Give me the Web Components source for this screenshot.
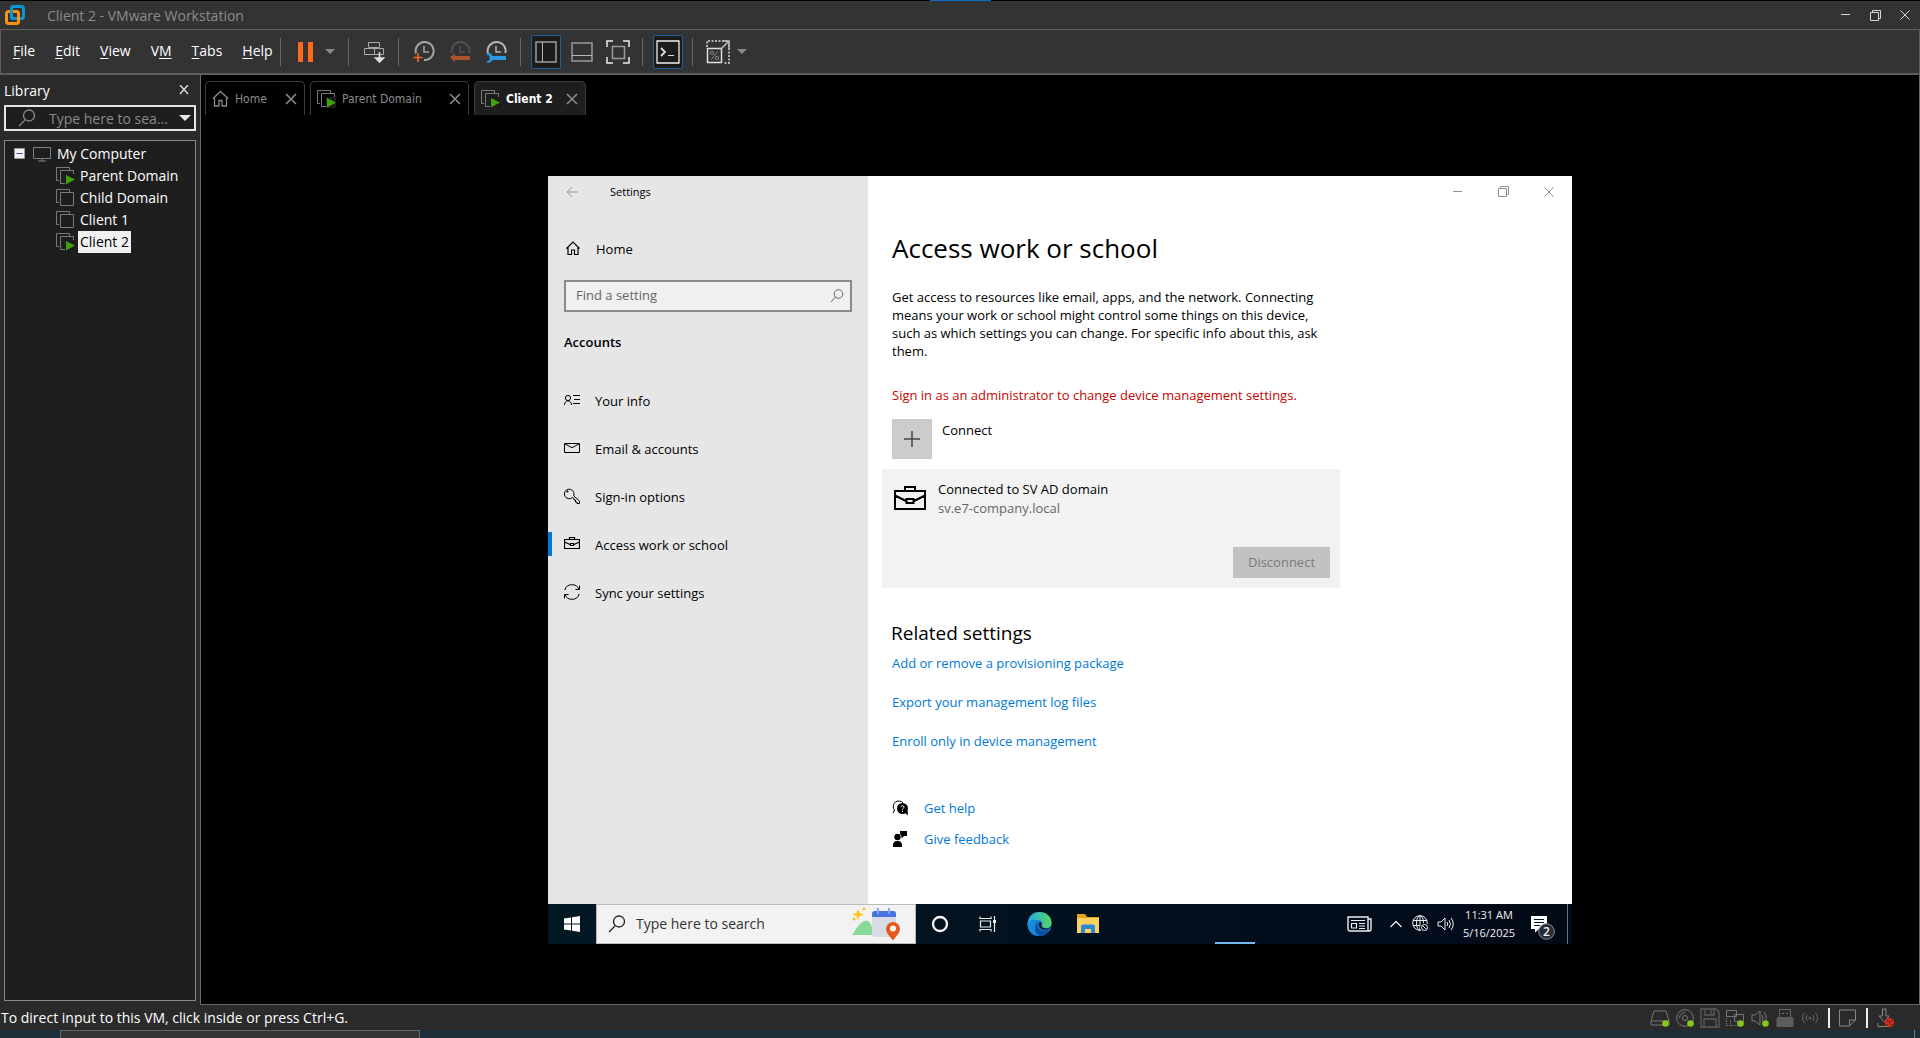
<!DOCTYPE html>
<html lang="en">
<head>
<meta charset="utf-8">
<title>Client 2 - VMware Workstation</title>
<style>
html,body{margin:0;height:100%;background:#000}
body{font-family:"Open Sans","Noto Sans",sans-serif;font-size:14px;color:#fff}
</style>
</head>
<body>
<vm-workstation></vm-workstation>
<script>
const stack = (extra) => `<path d="M13.5 3V.5H.5v13H3" fill="none" stroke="#7a7a7a"/><path d="M4.500 3.500h13v13h-13z" fill="none" stroke="#7a7a7a"/>${extra}`;
const play = '<path d="M9 7v11h10V7z" fill="#1c1c1c"/><path d="M9 16.500H4.500M17.500 7V3.500" stroke="#7a7a7a"/><path d="M10 8l9 4.500-9 5z" fill="#43a00c"/>';
const clock = (c) => `<path d="M4.500 15.500A9 9 0 1 1 11 19" fill="none" stroke="${c}" stroke-width="2"/><path d="M11 5v6h5" fill="none" stroke="${c}" stroke-width="1.500"/>`;
const dot = (x, y) => `<circle cx="${x}" cy="${y}" r="3.300" fill="#84c81b"/>`;
const ICONS = {
  logo: [20, 20, '<rect x="6.500" y="1.500" width="12" height="12" rx="2" fill="none" stroke="#0e95d3" stroke-width="3"/><rect x="1.500" y="6.500" width="12" height="12" rx="2" fill="none" stroke="#f6920e" stroke-width="3"/><path d="M6.500 5v6.500a2 2 0 0 0 2 2H10" fill="none" stroke="#0e95d3" stroke-width="3"/>'],
  min: [10, 10, '<path d="M0 4.500h9" stroke="currentColor"/>'],
  restore: [11, 11, '<path d="M2.500 2V.5h8v8H9M.5 2.500h8v8h-8z" fill="none" stroke="currentColor"/>'],
  close: [10, 10, '<path d="M.5.5l9 9M9.500.5l-9 9" stroke="currentColor"/>'],
  tabclose: [12, 12, '<path d="M1 1l10 10M11 1L1 11" stroke="#8a8a8a" stroke-width="1.600"/>'],
  libclose: [10, 10, '<path d="M1 0l8 9M9 0L1 9" stroke="#ddd" stroke-width="1.400"/>'],
  caret: [10, 5, '<path d="M0 0h10L5 5z" fill="currentColor"/>'],
  bigcaret: [12, 6, '<path d="M0 0h12L6 6z" fill="currentColor"/>'],
  pause: [16, 20, '<path d="M0 0h5v20H0zM10 0h5v20h-5z" fill="#ff6a1a"/>'],
  cad: [22, 22, '<path d="M5.500 6V1.500h11V6M1.500 7.500h10v6h-10zM11.500 7.500h9v6h-9zM5.500 6.500h11" fill="none" stroke="#aaa"/><path d="M16.500 11v9M12.500 17l4 4 4-4z" stroke="#ddd" stroke-width="1.600" fill="#ddd"/>'],
  snap: [22, 22, clock('#a6a6a6') + '<path d="M5 12v9M.5 16.500h9" stroke="#333" stroke-width="5"/><path d="M5 12v9M.5 16.500h9" stroke="#f0642c" stroke-width="1.600"/>'],
  revert: [22, 22, clock('#505050') + '<path d="M0 12h22v10H0z" fill="#333"/><path d="M1 16.500l5-4v2.500h15v4H6v2z" fill="#a9522b"/>'],
  manage: [22, 22, clock('#b5b5b5') + '<path d="M0 12h22v10H0z" fill="#333"/><path d="M1 12.500a4.500 4.500 0 0 1 6.500 2.500H21v4H7.500A4.500 4.500 0 0 1 1 21l2-1.500h1.500v-5H3z" fill="#2a9be2"/>'],
  libview: [22, 22, '<path d="M1 1h20v20H1z" fill="none" stroke="#9a9a9a" stroke-width="1.500"/><path d="M7.500 1v20" stroke="#b5b5b5"/>'],
  thumb: [22, 20, '<path d="M1 1h20v18H1z" fill="none" stroke="#9a9a9a" stroke-width="1.500"/><path d="M1 13.500h20" stroke="#b5b5b5"/>'],
  full: [24, 24, '<path d="M1 7V1h6M17 1h6v6M23 17v6h-6M7 23H1v-6" fill="none" stroke="#eee" stroke-width="1.500"/><path d="M6.500 6.500h12v12h-12z" fill="none" stroke="#9a9a9a" stroke-width="1.500"/>'],
  console: [24, 24, '<path d="M1 1h22v22H1z" fill="#1c1c1c" stroke="#eee" stroke-width="1.300"/><path d="M5 8l4 4-4 4" fill="none" stroke="#ddd" stroke-width="1.800"/><path d="M12 15.500h6" stroke="#ddd"/>'],
  stretch: [24, 24, '<path d="M1 7V1h22v22h-6" fill="none" stroke="#ddd" stroke-dasharray="2 1.500" stroke-width="1.500"/><path d="M1.500 8.500h14v14h-14z" fill="none" stroke="#ddd" stroke-width="1.500"/><path d="M15 9l7-7M16 1h7v7" fill="none" stroke="#bbb" stroke-width="1.500"/><circle cx="6" cy="13" r="1.600" fill="none" stroke="#888"/><circle cx="11" cy="18" r="1.600" fill="none" stroke="#888"/><path d="M11.500 11.500l-6 8" stroke="#888"/>'],
  lens: [18, 18, '<circle cx="11" cy="6.500" r="5.500" fill="none" stroke="currentColor" stroke-width="1.300"/><path d="M7 11l-6 6" stroke="currentColor" stroke-width="1.300"/>'],
  lenssm: [14, 14, '<circle cx="8.500" cy="5" r="4.300" fill="none" stroke="currentColor"/><path d="M5.500 8L1 13" stroke="currentColor"/>'],
  expand: [12, 12, '<path d="M.5.5h10v10H.5z" fill="#f2f2f2" stroke="#999"/><path d="M2.500 5.500h6" stroke="#3450a0"/>'],
  monitor: [18, 15, '<path d="M.5.5h17v11H.5zM9 12v2M5 14h8" fill="none" stroke="#808080"/>'],
  vmoff: [19, 18, stack('')],
  vmon: [19, 18, stack(play)],
  tabhome: [17, 17, '<path d="M1 8.500l7.500-7L16 8.500M2.500 8v8H7v-5.500h3V16h4.500V8" fill="none" stroke="#8a8a8a" stroke-width="1.300"/>'],
  back: [12, 12, '<path d="M12 6H1M6 1L1 6l5 5" fill="none" stroke="#999"/>'],
  home: [16, 14, '<path d="M1.500 7.500L8 1l6.500 6.500M3 6.500V13.500H6.500V9h3v4.500H13V6.500" fill="none" stroke="#000" stroke-width="1.200"/>'],
  info: [16, 10, '<circle cx="4" cy="3" r="2.600" fill="none" stroke="#000"/><path d="M.5 10C.5 4.500 7.500 4.500 7.500 10M9 .5h7M10 4.500h6M9 8.500h7" fill="none" stroke="#000"/>'],
  mail: [16, 10, '<path d="M.5.5h15v9H.5zM1 1l7 3.700L15 1" fill="none" stroke="#000"/>'],
  key: [16, 16, '<path d="M8.500 9.500A4.800 4.800 0 1 1 10 6.500L9.800 8l5.700 5v2.500H13V14h-1.500v-2H10v-1.500z" fill="none" stroke="#000"/><circle cx="3.500" cy="3.500" r="1" fill="#000"/>'],
  bag: [16, 13, '<path d="M.5 2.500h15v9H.5zM5.500 2.500v-2h5v2M.5 5l5.500 2.500M15.500 5L10 7.500M6.500 6.500h3v2h-3z" fill="none" stroke="#000" stroke-width="1.200"/>'],
  bigbag: [32, 24, '<path d="M1 5h30v18H1zM11 5V1h10v4M1 9.500l11 5.500M31 9.500L20 15M12.500 13h7v4h-7z" fill="none" stroke="#000" stroke-width="2"/>'],
  sync: [16, 16, '<path d="M.8 6A7.500 7.500 0 0 1 15 5.500M15.200 10A7.500 7.500 0 0 1 1 10.500M15.500 1.500v4h-4M.5 14.500v-4h4" fill="none" stroke="#000"/>'],
  plus: [16, 16, '<path d="M8 0v16M0 8h16" stroke="#444" stroke-width="1.500"/>'],
  help: [16, 16, '<path d="M1 13l1.500-3A5.300 5.300 0 1 1 11 3" fill="none" stroke="#000"/><circle cx="10.500" cy="8.500" r="5.500"/><path d="M12 12l4 3.500-.5-5z"/><path d="M8.800 7.200c.2-2 3.400-1.800 3.200 0-.1 1.200-1.600 1.100-1.600 2.500M10.400 10.800v1.200" fill="none" stroke="#fff"/>'],
  feedback: [16, 16, '<circle cx="5.500" cy="6" r="3.200"/><path d="M1 16v-2.500a4 4 0 0 1 4-3.500h1a4 4 0 0 1 4 3.500V16zM8 0h7v5h-3l-2.500 2.500V5L8 3z"/>'],
  win: [16, 18, '<path d="M0 3.500l7-1v6H0zM8 2.300L16 1v7.500H8zM0 9.500h7v6l-7-1zM8 9.500h8V17l-8-1.200z" fill="#fff"/>'],
  art: [48, 34, '<path d="M6 2l1.500 4L12 7.500 7.500 9 6 13 4.500 9 0 7.500 4.500 6z" fill="#fcc419"/><circle cx="2" cy="12" r="1.600" fill="#fcc419"/><circle cx="12" cy="2" r="1.400" fill="#fcc419"/><path d="M0 28c6-9 10-16 16-14 4 2 4 8 6 14z" fill="#8ad89a"/><rect x="20" y="4" width="24" height="26" rx="3" fill="#d9dce6"/><path d="M20 10V7a3 3 0 0 1 3-3h18a3 3 0 0 1 3 3v3z" fill="#4774dd"/><path d="M26 1v6M37 1v6" stroke="#81a8f7" stroke-width="2"/><path d="M41 33.500c-4-5-7-8-7-11.500a7 7 0 0 1 14 0C48 25.500 45 28.500 41 33.500z" fill="#e55a1c"/><circle cx="41" cy="21.500" r="3" fill="#fff"/>'],
  cortana: [18, 18, '<circle cx="9" cy="9" r="7" fill="none" stroke="#f5f5f5" stroke-width="2.300"/>'],
  taskview: [18, 18, '<path d="M1 4V1.500M1 3.500h11M12 4V1.500M1.500 6h10v6h-10zM1 16.500v-2h11v2" fill="none" stroke="#eee" stroke-width="1.200"/><path d="M15.500 1v16" stroke="#eee" stroke-width="1.200"/><path d="M14 5h3v3h-3z" fill="#eee"/>'],
  edge: [25, 28, '<defs><linearGradient id="g" x1="0" x2="1"><stop offset="0" stop-color="#26a9e8"/><stop offset="1" stop-color="#56d85d"/></linearGradient></defs><circle cx="12.500" cy="14" r="12" fill="#1679ce"/><path d="M.7 13C2 5 7 2 12.500 2c7 0 12 5 12 10.500 0 4-3 6-6.500 6-4 0-4-2-3-3 1-1.500.5-4-2.500-5C8 9.500 4 10 .7 13z" fill="url(#g)"/><path d="M.6 13C4 9 8 9 11 11c-5 3-4 11 4 13.500-8 4-15-3-14.400-11.500z" fill="#1889db"/><path d="M12 12c-4 4 0 11 11 8-2 3.500-6 6-10 6C6 23 7 14 12 12z" fill="#0c4f9f"/><path d="M13 12c3 1 .5 3 2 5 2 2 7 2 9.500-.5-2 4-11 4.500-12.500-.5-.3-2 0-3 1-4z" fill="#04182a"/>'],
  folder: [22, 20, '<path d="M0 0h8l2 3h12v16H0z" fill="#e8a711"/><path d="M0 4h22v15H0z" fill="#fdd262"/><path d="M4 19v-6.500a2 2 0 0 1 2-2h10a2 2 0 0 1 2 2V19h-4v-4H8v4z" fill="#2c8ad2"/>'],
  news: [25, 16, '<path d="M1 1h20v14H3a2 2 0 0 1-2-2zM21 3h3v10a2 2 0 0 1-2 2h-2" fill="none" stroke="#eee" stroke-width="1.400"/><path d="M4 4.500h14M12 7.500h6M12 10h6M12 12.500h6M4.500 7.500h5v4.500h-5z" fill="none" stroke="#eee" stroke-width="1.200"/>'],
  chev: [12, 8, '<path d="M.5 7L6 1.500 11.500 7" fill="none" stroke="#eee" stroke-width="1.300"/>'],
  globe: [17, 17, '<circle cx="8" cy="8" r="7.300" fill="none" stroke="#eee"/><ellipse cx="8" cy="8" rx="3.500" ry="7.300" fill="none" stroke="#eee"/><path d="M1 5.500h14M1 10.500h14M8 1v14" stroke="#eee"/><circle cx="12.500" cy="12.500" r="4.500" fill="#030f1d"/><circle cx="12.500" cy="12.500" r="3" fill="none" stroke="#eee"/><path d="M10.500 10.500l4 4" stroke="#eee"/>'],
  sound: [17, 14, '<path d="M1 5h3l4-4v12L4 9H1z" fill="none" stroke="#eee"/><path d="M10 5q1.500 2 0 4M12 3q3 4 0 8M14 1q4.500 6 0 12" fill="none" stroke="#eee"/>'],
  notify: [24, 24, '<path d="M0 0h16v13H8l-4 3.500V13H0z" fill="#fff"/><path d="M3 3.500h10M3 6.500h10M3 9.500h6" stroke="#061020"/><circle cx="15.500" cy="15.500" r="7.800" fill="#272d36" stroke="#8b9096"/>'],
  sdisk: [20, 18, '<path d="M4 2h12l3 10v4H1v-4zM1 12h18" fill="none" stroke="#777"/>' + dot(15.500, 14.500)],
  scd: [20, 18, '<circle cx="10" cy="9" r="8.300" fill="none" stroke="#777"/><circle cx="10" cy="9" r="2.500" fill="none" stroke="#777"/><path d="M4.500 9A5.500 5.500 0 0 1 10 3.500" fill="none" stroke="#777"/>' + dot(15.500, 14.500)],
  sfloppy: [20, 20, '<path d="M1 1h15l3 3v15H1zM4 19v-8h12v8M5 1v6h9V1M11 2v4" fill="none" stroke="#5c5c5c" stroke-width="1.300"/>'],
  snet: [20, 18, '<path d="M1.500 1.500h10v6h-10zM9.500 5.500h9v7h-9z" fill="#2a2a2a" stroke="#777"/><path d="M1.500 9v7.500h12M5.500 11.500v5" fill="none" stroke="#777" stroke-dasharray="1.500 1"/>' + dot(15.500, 14.500)],
  sspk: [20, 18, '<path d="M2 6h3l5-4v14l-5-4H2z" fill="none" stroke="#777"/><path d="M12 6q2 3 0 6M14 3q3 3 2 8" fill="none" stroke="#777"/>' + dot(15.500, 14.500)],
  susb: [20, 18, '<path d="M4.500 8V.5h11V8" fill="none" stroke="#666"/><path d="M7 4.500h2M11 4.500h2" stroke="#777"/><path d="M1.500 10a2 2 0 0 1 2-2h13a2 2 0 0 1 2 2v8h-17z" fill="#5c5c5c"/>'],
  swifi: [20, 14, '<circle cx="10" cy="7" r="1.500" fill="#5c5c5c"/><path d="M7 4q-2 3 0 6M13 4q2 3 0 6M4.500 2q-4 5 0 10M15.500 2q4 5 0 10" fill="none" stroke="#666"/>'],
  snote: [20, 18, '<path d="M1.500 1h16v10l-6 6h-10zM17 11h-5.500v6" fill="none" stroke="#888"/>'],
  sdown: [20, 20, '<path d="M6.500 1v7H3l5.500 6L13 8H10V1zM2 15v3.500h10" fill="none" stroke="#888"/><circle cx="13.500" cy="14.500" r="4.600" fill="#e02a1c"/><path d="M11 12l5 5M16 12l-5 5" stroke="#2a2a2a" stroke-dasharray="1.600 1.200" stroke-width="1.400"/>']
};
const define = (name, markup) => customElements.define(name, class extends HTMLElement {
  constructor() {
    super();
    const t = document.createElement('template');
    t.innerHTML = `<style>*{box-sizing:border-box}button{font:inherit;color:inherit;background:none;border:0;padding:0;margin:0;display:flex;align-items:center;justify-content:center}a{text-decoration:none;color:inherit}input{font:inherit;border:0;outline:0;background:none;padding:0;min-width:0;flex:1}</style>${markup}`;
    this.attachShadow({ mode: 'open' }).append(t.content.cloneNode(true));
  }
});
customElements.define('ui-icon', class extends HTMLElement {
  connectedCallback() {
    if (this.shadowRoot) return;
    const [w, h, body] = ICONS[this.getAttribute('name')];
    this.attachShadow({ mode: 'open' }).innerHTML =
      `<style>:host{display:block;flex:none}svg{display:block}</style><svg width="${w}" height="${h}" viewBox="0 0 ${w} ${h}" aria-hidden="true">${body}</svg>`;
  }
});

define('vm-titlebar', `<style>
:host{display:flex;align-items:center;height:29px;background:#333;border-bottom:1px solid #5e5e5e;color:#8c8c8c;padding:0 10px 0 5px}
span{flex:1;padding-left:22px}
nav{display:flex;gap:19px;color:#d8d8d8}
</style>
<ui-icon name="logo"></ui-icon><span>Client 2 - VMware Workstation</span>
<nav><button aria-label="Minimize"><ui-icon name="min"></ui-icon></button><button aria-label="Restore"><ui-icon name="restore"></ui-icon></button><button aria-label="Close"><ui-icon name="close"></ui-icon></button></nav>`);

define('tool-separator', `<style>:host{display:block;width:1px;height:28px;background:#686868;margin:0 10px 0 9px}</style>`);
define('tool-button', `<style>
:host{display:block}
:host(.next){margin-left:6px}
button{width:30px;height:34px;border:1px solid transparent;border-radius:2px}
:host([pressed]) button{border-color:#1c5f9b;background:#1c1c1c}
:host([slim]) button{width:18px}
</style><button><slot></slot></button>`);

define('vm-menubar', `<style>
:host{display:flex;align-items:center;height:45px;background:#333;border-bottom:2px solid #5e5e5e;border-left:1px solid #5e5e5e;border-right:1px solid #5e5e5e;color:#fff}
.menus{display:flex;width:279px;padding:0 0 2px 2px}
.menus button{padding:0 10px;height:26px}
u{text-underline-offset:2px;text-decoration-thickness:1px}
tool-button{color:#8a8a8a}
tool-separator:first-of-type{margin-left:0}
</style>
<div class="menus"><button><span><u>F</u>ile</span></button><button><span><u>E</u>dit</span></button><button><span><u>V</u>iew</span></button><button><span>V<u>M</u></span></button><button><span><u>T</u>abs</span></button><button><span><u>H</u>elp</span></button></div>
<tool-separator></tool-separator>
<tool-button><ui-icon name="pause"></ui-icon></tool-button><tool-button slim><ui-icon name="caret"></ui-icon></tool-button>
<tool-separator></tool-separator>
<tool-button><ui-icon name="cad"></ui-icon></tool-button>
<tool-separator></tool-separator>
<tool-button><ui-icon name="snap"></ui-icon></tool-button><tool-button class="next"><ui-icon name="revert"></ui-icon></tool-button><tool-button class="next"><ui-icon name="manage"></ui-icon></tool-button>
<tool-separator></tool-separator>
<tool-button pressed><ui-icon name="libview"></ui-icon></tool-button><tool-button class="next"><ui-icon name="thumb"></ui-icon></tool-button><tool-button class="next"><ui-icon name="full"></ui-icon></tool-button>
<tool-separator></tool-separator>
<tool-button pressed><ui-icon name="console"></ui-icon></tool-button>
<tool-separator></tool-separator>
<tool-button><ui-icon name="stretch"></ui-icon></tool-button><tool-button slim><ui-icon name="caret"></ui-icon></tool-button>`);

define('tree-item', `<style>
:host{display:flex;align-items:center;height:22px;padding-left:51px}
:host([root]) span{margin-left:4px}
span{padding:0 2px;margin-left:3px;line-height:22px}
:host([selected]) span{background:#f0f0f0;color:#000}
</style><slot name="icon"></slot><span><slot></slot></span>`);

define('vm-library', `<style>
:host{display:flex;flex-direction:column;width:200px;padding:0 4px 4px;background:#2a2a2a}
header{display:flex;align-items:center;justify-content:space-between;height:30px;padding-right:7px}
.search{display:flex;align-items:center;height:26px;border:2px solid #e6e6e6;background:#1e1e1e;color:#8a8a8a;padding:0 3px 0 12px;gap:13px}
.search input{color:#8a8a8a;margin-right:-4px}
.search input::placeholder{color:#8a8a8a}
.search button{color:#e6e6e6;margin-left:-8px}
.tree{flex:1;margin-top:9px;border:1px solid #828790;background:#1e1e1e;padding-top:2px}
.root{display:flex;align-items:center}
.root button{margin-left:9px}
.root tree-item{padding-left:7px}
</style>
<header><span>Library</span><button aria-label="Close library"><ui-icon name="libclose"></ui-icon></button></header>
<div class="search"><ui-icon name="lens"></ui-icon><input aria-label="Search library" placeholder="Type here to sea..."><button aria-label="Search options"><ui-icon name="bigcaret"></ui-icon></button></div>
<div class="tree">
<div class="root"><button aria-label="Collapse"><ui-icon name="expand"></ui-icon></button><tree-item root><ui-icon slot="icon" name="monitor"></ui-icon>My Computer</tree-item></div>
<tree-item><ui-icon slot="icon" name="vmon"></ui-icon>Parent Domain</tree-item>
<tree-item><ui-icon slot="icon" name="vmoff"></ui-icon>Child Domain</tree-item>
<tree-item><ui-icon slot="icon" name="vmoff"></ui-icon>Client 1</tree-item>
<tree-item selected><ui-icon slot="icon" name="vmon"></ui-icon>Client 2</tree-item>
</div>`);

define('vm-tab', `<style>
:host{display:flex;align-items:center;height:34px;border:1px solid #3c3c3c;border-bottom:0;border-radius:5px 5px 0 0;padding:0 7px 0 6px;color:#8a8a8a;font:12px "DejaVu Sans Condensed","DejaVu Sans",sans-serif}
:host([active]){background:#1e1e1e;color:#fff;font-weight:bold}
.name{margin:0 12px 0 6px;flex:1;white-space:nowrap;justify-content:flex-start}
</style><slot name="icon"></slot><button class="name" role="tab"><slot></slot></button><button aria-label="Close tab"><ui-icon name="tabclose"></ui-icon></button>`);

define('vm-tabs', `<style>
:host{display:flex;gap:5px;padding:6px 0 0 4px}
.a{width:100px}.b{width:159px}.c{width:112px}
</style>
<vm-tab class="a"><ui-icon slot="icon" name="tabhome"></ui-icon>Home</vm-tab>
<vm-tab class="b"><ui-icon slot="icon" name="vmon"></ui-icon>Parent Domain</vm-tab>
<vm-tab class="c" active><ui-icon slot="icon" name="vmon"></ui-icon>Client 2</vm-tab>`);

define('settings-link', `<style>
:host{display:block}
a{display:flex;align-items:center;height:48px;padding-left:12px;gap:15px;border-left:4px solid transparent;color:#000}
span{padding-top:2px}
:host([current]) a{border-image:linear-gradient(transparent 25%,#0078d7 25%,#0078d7 75%,transparent 75%) 0 0 0 4}
</style><a href="#"><slot name="icon"></slot><span><slot></slot></span></a>`);

define('settings-nav', `<style>
:host{display:flex;flex-direction:column;width:320px;background:#e6e6e6;color:#000}
.bar{display:flex;align-items:center;height:32px;padding-left:18px;gap:32px;font-size:11px}
settings-link.home{margin:16px 0 0 1px}
.find{display:flex;align-items:center;height:32px;margin:8px 16px 0;border:2px solid #8a8a8a;background:#f0f0f0;padding:0 6px 0 10px;color:#666}
.find input{color:#666;padding-bottom:2px}.find input::placeholder{color:#666}
h2{margin:18px 16px 22px;font-size:13px;line-height:24px;font-weight:600}
</style>
<div class="bar"><button aria-label="Back"><ui-icon name="back"></ui-icon></button><span>Settings</span></div>
<settings-link class="home"><ui-icon slot="icon" name="home"></ui-icon>Home</settings-link>
<div class="find"><input aria-label="Find a setting" placeholder="Find a setting"><ui-icon name="lenssm"></ui-icon></div>
<h2>Accounts</h2>
<nav>
<settings-link><ui-icon slot="icon" name="info"></ui-icon>Your info</settings-link>
<settings-link><ui-icon slot="icon" name="mail"></ui-icon>Email &amp; accounts</settings-link>
<settings-link><ui-icon slot="icon" name="key"></ui-icon>Sign-in options</settings-link>
<settings-link current><ui-icon slot="icon" name="bag"></ui-icon>Access work or school</settings-link>
<settings-link><ui-icon slot="icon" name="sync"></ui-icon>Sync your settings</settings-link>
</nav>`);

define('settings-page', `<style>
:host{display:block;flex:1;background:#fff;color:#000}
.win{display:flex;justify-content:flex-end;align-items:center;height:32px;padding-right:18px;gap:35px;color:#8f8f8f}
main{width:458px;margin-left:14px}
h1{margin:18px 10px 0;font-size:26px;line-height:44px;font-weight:400}
p{margin:18px 10px 0;line-height:18px}
.red{color:#c50500;margin-top:26px}
.connect{display:flex;gap:10px;margin:15px 10px 0;line-height:22px;align-items:flex-start}
.connect button{width:40px;height:40px;background:#ccc}
.card{margin-top:10px;padding:11px 10px 10px;background:#f2f2f2;min-height:119px;display:flex;flex-direction:column;justify-content:space-between}
.who{display:flex;gap:12px;padding-left:2px;line-height:19px}
.who ui-icon{margin-top:6px}
.who small{display:block;font-size:inherit;color:#666}
.card button{align-self:flex-end;width:97px;height:31px;background:#c2c2c2;color:#7a7a7a}
h2{margin:30px 9px 0;font-size:19px;line-height:30px;font-weight:400}
.links{display:flex;flex-direction:column;align-items:flex-start;gap:19px;margin:5px 10px 0;line-height:20px;color:#0078d7}
.more{display:flex;flex-direction:column;align-items:flex-start;gap:11px;margin:47px 10px 0;line-height:20px;color:#0078d7}
.more a{display:flex;align-items:center;gap:16px}
.more ui-icon{color:#000}
</style>
<div class="win"><button aria-label="Minimize"><ui-icon name="min"></ui-icon></button><button aria-label="Restore"><ui-icon name="restore"></ui-icon></button><button aria-label="Close"><ui-icon name="close"></ui-icon></button></div>
<main>
<h1>Access work or school</h1>
<p>Get access to resources like email, apps, and the network. Connecting means your work or school might control some things on this device, such as which settings you can change. For specific info about this, ask them.</p>
<p class="red">Sign in as an administrator to change device management settings.</p>
<div class="connect"><button aria-labelledby="c"><ui-icon name="plus"></ui-icon></button><span id="c">Connect</span></div>
<div class="card"><div class="who"><ui-icon name="bigbag"></ui-icon><div>Connected to SV AD domain<small>sv.e7-company.local</small></div></div><button disabled>Disconnect</button></div>
<h2>Related settings</h2>
<div class="links"><a href="#">Add or remove a provisioning package</a><a href="#">Export your management log files</a><a href="#">Enroll only in device management</a></div>
<div class="more"><a href="#"><ui-icon name="help"></ui-icon>Get help</a><a href="#"><ui-icon name="feedback"></ui-icon>Give feedback</a></div>
</main>`);

define('guest-taskbar', `<style>
:host{display:flex;height:40px;background:linear-gradient(90deg,#021824,#020e1c 70%,#030a18);color:#f0f0f0}
.start{width:48px}
label{display:flex;align-items:center;width:320px;background:#f2f2f2;border:1px solid #bbb;color:#222;font-size:14px;padding:0 15px 0 11px;gap:10px}
label input{color:#333}label input::placeholder{color:#333}
.apps{display:flex;flex:1}.apps button{width:48px}
.apps .edge{width:54px}.apps .folder{width:44px}
.running{align-self:flex-end;width:40px;height:2px;background:#76b9ed;margin-left:105px}
.tray{display:flex;align-items:center;gap:8px}
.tray .news{margin-right:10px}.tray .chev{margin-right:2px}
time{font-size:11px;line-height:18px;text-align:center;width:54px}
.bell{position:relative;margin:8px 0 0 7px}
.bell b{position:absolute;left:12px;top:8px;font-size:12px;line-height:15px;font-weight:600}
.desk{width:5px;margin-left:4px;align-self:stretch;border-left:1px solid #66707a}
</style>
<button class="start" aria-label="Start"><ui-icon name="win"></ui-icon></button>
<label><ui-icon name="lens"></ui-icon><input aria-label="Search" placeholder="Type here to search"><ui-icon name="art"></ui-icon></label>
<div class="apps"><button aria-label="Cortana"><ui-icon name="cortana"></ui-icon></button><button aria-label="Task view"><ui-icon name="taskview"></ui-icon></button><button class="edge" aria-label="Edge"><ui-icon name="edge"></ui-icon></button><button class="folder" aria-label="File Explorer"><ui-icon name="folder"></ui-icon></button><div class="running"></div></div>
<div class="tray"><ui-icon class="news" name="news"></ui-icon><ui-icon class="chev" name="chev"></ui-icon><ui-icon name="globe"></ui-icon><ui-icon name="sound"></ui-icon><time>11:31 AM<br>5/16/2025</time><button class="bell" aria-label="Notifications"><ui-icon name="notify"></ui-icon><b>2</b></button><div class="desk"></div></div>`);

define('guest-screen', `<style>
:host{display:flex;flex-direction:column;width:1024px;max-width:100%;min-height:768px;font-size:13px}
.window{display:flex;flex:1}
</style><div class="window"><settings-nav></settings-nav><settings-page></settings-page></div><guest-taskbar></guest-taskbar>`);

define('vm-status', `<style>
:host{display:flex;align-items:center;height:25px;background:#2a2a2a;padding:0 24px 0 1px}
span{flex:1}
div{display:flex;align-items:center;gap:5px}
i{width:2px;height:20px;background:#eee;margin:0 3px}
</style><span>To direct input to this VM, click inside or press Ctrl+G.</span>
<div><ui-icon name="sdisk"></ui-icon><ui-icon name="scd"></ui-icon><ui-icon name="sfloppy"></ui-icon><ui-icon name="snet"></ui-icon><ui-icon name="sspk"></ui-icon><ui-icon name="susb"></ui-icon><ui-icon name="swifi"></ui-icon><i></i><ui-icon name="snote"></ui-icon><i></i><ui-icon name="sdown"></ui-icon></div>`);

define('vm-workstation', `<style>
:host{display:flex;flex-direction:column;min-height:100vh;background:#000}
.top{display:flex;justify-content:center;height:1px;background:#000}
.top i{width:61px;background:#0a6cc0}
.body{display:flex;flex:1}
.stage{flex:1;display:flex;flex-direction:column;border:1px solid #6a6a6a;border-top:0;background:#000}
.view{flex:1;display:flex;align-items:center;justify-content:center}
.under{display:flex;height:8px;padding:0 5px 0 60px;background:#1c2e38;justify-content:space-between}
.under i{width:360px;background:#333;border:1px solid #666;border-bottom:0}
.under b{width:1px;background:#6f7f88}
</style>
<div class="top"><i></i></div>
<vm-titlebar></vm-titlebar><vm-menubar></vm-menubar>
<div class="body"><vm-library></vm-library><div class="stage"><vm-tabs></vm-tabs><div class="view"><guest-screen></guest-screen></div></div></div>
<vm-status></vm-status>
<div class="under"><i></i><b></b></div>`);
</script>
</body>
</html>
